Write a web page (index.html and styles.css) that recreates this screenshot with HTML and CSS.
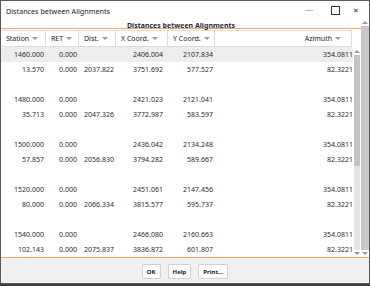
FILE: index.html
```html
<!DOCTYPE html>
<html lang="en">
<head>
    <meta charset="UTF-8">
    <meta name="viewport" content="width=device-width, initial-scale=1.0">
    <title>Distances between Alignments</title>
    <link rel="stylesheet" href="styles.css">
</head>
<body>
    <div class="window">
      <div class="titlebar">
        <span class="title">Distances between Alignments</span>
        <div class="controls">
          <span class="ctl min"></span>
          <span class="ctl max"></span>
          <span class="ctl close">&#x2715;</span>
        </div>
      </div>

      <div class="main">
        <div class="content">
          <div class="heading">Distances between Alignments</div>
          <div class="grid-head">
            <div class="hcell c1">Station <i class="sort"></i></div>
            <div class="hcell c2">RET <i class="sort"></i></div>
            <div class="hcell c3">Dist. <i class="sort"></i></div>
            <div class="hcell c4">X Coord. <i class="sort"></i></div>
            <div class="hcell c5">Y Coord. <i class="sort"></i></div>
            <div class="hcell c6 right">Azimuth <i class="sort"></i></div>
          </div>
          <div class="grid-body">
            <div class="rows">
              <div class="row selected"><span class="c1">1460.000</span><span class="c2">0.000</span><span class="c3"></span><span class="c4">2406.004</span><span class="c5">2107.834</span><span class="c6">354.0811</span></div>
              <div class="row"><span class="c1">13.570</span><span class="c2">0.000</span><span class="c3">2037.822</span><span class="c4">3751.692</span><span class="c5">577.527</span><span class="c6">82.3221</span></div>
              <div class="row"></div>
              <div class="row"><span class="c1">1480.000</span><span class="c2">0.000</span><span class="c3"></span><span class="c4">2421.023</span><span class="c5">2121.041</span><span class="c6">354.0811</span></div>
              <div class="row"><span class="c1">35.713</span><span class="c2">0.000</span><span class="c3">2047.326</span><span class="c4">3772.987</span><span class="c5">583.597</span><span class="c6">82.3221</span></div>
              <div class="row"></div>
              <div class="row"><span class="c1">1500.000</span><span class="c2">0.000</span><span class="c3"></span><span class="c4">2436.042</span><span class="c5">2134.248</span><span class="c6">354.0811</span></div>
              <div class="row"><span class="c1">57.857</span><span class="c2">0.000</span><span class="c3">2056.830</span><span class="c4">3794.282</span><span class="c5">589.667</span><span class="c6">82.3221</span></div>
              <div class="row"></div>
              <div class="row"><span class="c1">1520.000</span><span class="c2">0.000</span><span class="c3"></span><span class="c4">2451.061</span><span class="c5">2147.456</span><span class="c6">354.0811</span></div>
              <div class="row"><span class="c1">80.000</span><span class="c2">0.000</span><span class="c3">2066.334</span><span class="c4">3815.577</span><span class="c5">595.737</span><span class="c6">82.3221</span></div>
              <div class="row"></div>
              <div class="row"><span class="c1">1540.000</span><span class="c2">0.000</span><span class="c3"></span><span class="c4">2466.080</span><span class="c5">2160.663</span><span class="c6">354.0811</span></div>
              <div class="row"><span class="c1">102.143</span><span class="c2">0.000</span><span class="c3">2075.837</span><span class="c4">3836.872</span><span class="c5">601.807</span><span class="c6">82.3221</span></div>
            </div>
            <div class="vscroll inner">
              <i class="arrow up"></i>
              <div class="track"><div class="thumb"></div></div>
              <i class="arrow down"></i>
            </div>
          </div>
        </div>
        <div class="vscroll outer">
          <i class="arrow up"></i>
          <div class="track"></div>
          <i class="arrow down"></i>
        </div>
      </div>

      <div class="footer">
        <button type="button">OK</button>
        <button type="button">Help</button>
        <button type="button">Print...</button>
      </div>
    </div>
</body>
</html>
```

FILE: styles.css
```css
* {
  margin: 0;
  padding: 0;
  box-sizing: border-box;
}
body {
  width: 370px;
  height: 286px;
  background-color: #3c3c3c;
  font-family: "Noto Sans", "Open Sans", sans-serif;
  color: #2a2a2a;
  overflow: hidden;
}
.window {
  display: flex;
  flex-direction: column;
  width: 370px;
  height: 284px;
  background-color: #fff;
  border: 1px solid #5a5a5a;
}
.titlebar {
  display: flex;
  align-items: center;
  justify-content: space-between;
  height: 19px;
  padding-left: 5px;
}
.title {
  font-size: 7.2px;
  color: #222;
}
.controls {
  display: flex;
  align-items: center;
  height: 100%;
}
.ctl {
  display: flex;
  align-items: center;
  justify-content: center;
  width: 27px;
  height: 100%;
  font-size: 8px;
  color: #333;
}
.min:before {
  content: "";
  width: 8px;
  height: 1px;
  background-color: #bbb;
}
.max:before {
  content: "";
  width: 7px;
  height: 7px;
  border: 1px solid #333;
}
.close {
  width: 20px;
  font-size: 7px;
  padding-right: 6px;
}
.main {
  display: flex;
  flex: 1;
  min-height: 0;
  border-bottom: 1px solid #f2a46a;
}
.content {
  display: flex;
  flex-direction: column;
  flex: 1;
  min-width: 0;
}
.heading {
  height: 9px;
  padding-top: 3px;
  line-height: 6px;
  font-size: 7px;
  font-weight: bold;
  text-align: center;
  border-bottom: 1px solid #f2a46a;
  margin-bottom: 1px;
}
.grid-head {
  display: flex;
  height: 17px;
  width: 351px;
  border-top: 1px solid #dcdcdc;
  border-bottom: 1px solid #dcdcdc;
}
.hcell {
  display: flex;
  align-items: center;
  gap: 3px;
  font-size: 7px;
  color: #222;
  border-right: 1px solid #dcdcdc;
  padding-left: 5px;
}
.hcell.right {
  justify-content: flex-end;
  padding-right: 10px;
}
.sort {
  width: 0;
  height: 0;
  border-left: 3px solid transparent;
  border-right: 3px solid transparent;
  border-top: 3px solid #9a9a9a;
}
.c1 { width: 45px; }
.c2 { width: 33px; }
.c3 { width: 37px; }
.c4 { width: 52px; }
.c5 { width: 47px; }
.c6 { width: 137px; }
.grid-body {
  display: flex;
  flex: 1;
  min-height: 0;
}
.rows {
  width: 352px;
}
.row {
  display: flex;
  height: 15px;
  align-items: center;
  font-size: 7px;
}
.row.selected {
  background-color: #ededed;
}
.row span {
  text-align: right;
  padding-right: 2px;
}
.row .c4 {
  padding-right: 5px;
}
.row .c6 {
  width: 138px;
  padding-right: 0;
}
.vscroll {
  display: flex;
  flex-direction: column;
  align-items: center;
}
.vscroll .track {
  flex: 1;
  width: 100%;
}
.vscroll.inner {
  width: 8px;
  padding: 3px 1px 2px;
}
.vscroll.inner .track {
  background-color: #e4e4e4;
  margin: 2px 0;
}
.thumb {
  height: 111px;
  background-color: #c4c4c4;
}
.vscroll.outer {
  width: 8px;
  padding: 1px 0 2px;
}
.vscroll.outer .track {
  background-color: #c8c8c8;
  margin: 2px 0;
}
.arrow {
  width: 0;
  height: 0;
  border-left: 3px solid transparent;
  border-right: 3px solid transparent;
}
.arrow.up {
  border-bottom: 3px solid #999;
}
.arrow.down {
  border-top: 3px solid #999;
}
.footer {
  display: flex;
  justify-content: center;
  align-items: center;
  gap: 7px;
  height: 25px;
  padding-top: 2px;
  background-color: #f0f0f0;
}
.footer button {
  height: 15px;
  padding: 0 4px;
  font-family: "Noto Sans", sans-serif;
  font-size: 6px;
  font-weight: bold;
  color: #222;
  background-color: #fdfdfd;
  border: 1px solid #d0d0d0;
  border-radius: 1px;
}
```
